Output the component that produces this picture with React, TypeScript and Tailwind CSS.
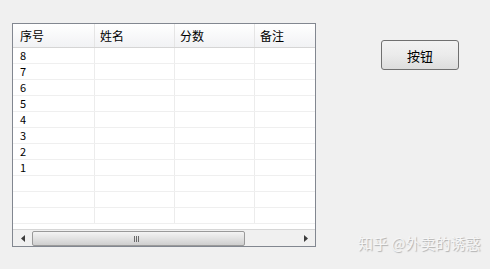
const cols = ["序号", "姓名", "分数", "备注"];
const nums = ["8", "7", "6", "5", "4", "3", "2", "1", "", "", ""];

function ScrollBar() {
  return (
    <div className="flex h-[17px] items-center border-t border-[#d6d6d6] bg-[#f0f0f0]">
      <div className="flex w-[19px] justify-center">
        <svg width="4" height="7" viewBox="0 0 4 7">
          <path d="M4 0 L0 3.5 L4 7 Z" fill="#3c3c3c" />
        </svg>
      </div>
      <div className="relative h-[15px] w-[213px] rounded-[2px] border border-[#9a9a9a] bg-gradient-to-b from-[#f4f4f4] via-[#e2e2e2] to-[#cfcfcf]">
        <div className="absolute left-[101px] top-[4px] flex gap-[1px]">
          <div className="h-[6px] w-[1px] bg-[#6a6a6a]" />
          <div className="h-[6px] w-[1px] bg-[#6a6a6a]" />
          <div className="h-[6px] w-[1px] bg-[#6a6a6a]" />
        </div>
      </div>
      <div className="flex-1" />
      <div className="flex w-[18px] justify-center">
        <svg width="4" height="7" viewBox="0 0 4 7">
          <path d="M0 0 L4 3.5 L0 7 Z" fill="#3c3c3c" />
        </svg>
      </div>
    </div>
  );
}

export default function App() {
  return (
    <div
      className="relative h-[269px] w-[490px] overflow-hidden bg-[#f0f0f0] text-[12px] text-black"
      style={{ fontFamily: '"Noto Sans CJK SC", "DejaVu Sans", sans-serif' }}
    >
      <div className="absolute left-[12px] top-[23px] flex h-[224px] w-[304px] flex-col border border-[#828790] bg-white">
        <div className="flex h-[24px] border-b border-[#d5d5d5] bg-gradient-to-b from-white to-[#f1f2f4]">
          {cols.map((c, i) => (
            <div
              key={c}
              className={`flex items-center leading-none ${i === 0 ? "w-[82px] pl-[7px]" : i === 3 ? "flex-1 pl-[5px]" : "w-[80px] pl-[5px]"} ${i < 3 ? "border-r border-[#e5e5e5]" : ""}`}
            >
              {c}
            </div>
          ))}
        </div>
        <div className="flex-1 overflow-hidden">
          {nums.map((n, r) => (
            <div key={r} className="flex h-[16px] border-b border-[#efefef]">
              <div className="flex w-[82px] items-center border-r border-[#ececec] pl-[7px] text-[11px] leading-none">
                {n}
              </div>
              <div className="w-[80px] border-r border-[#ececec]" />
              <div className="w-[80px] border-r border-[#ececec]" />
              <div className="flex-1" />
            </div>
          ))}
        </div>
        <ScrollBar />
      </div>

      <button className="absolute left-[381px] top-[40px] flex h-[30px] w-[78px] items-center justify-center rounded-[3px] border border-[#707070] bg-gradient-to-b from-[#f2f2f2] via-[#ebebeb] to-[#dddddd] text-[13px] leading-none text-black">
        按钮
      </button>

      <div
        className="absolute left-[358px] top-[235px] text-[15px] leading-none text-[#f6f6f6]"
        style={{ textShadow: "1px 1px 1px #b0b0b0" }}
      >
        知乎 @外卖的诱惑
      </div>
    </div>
  );
}
